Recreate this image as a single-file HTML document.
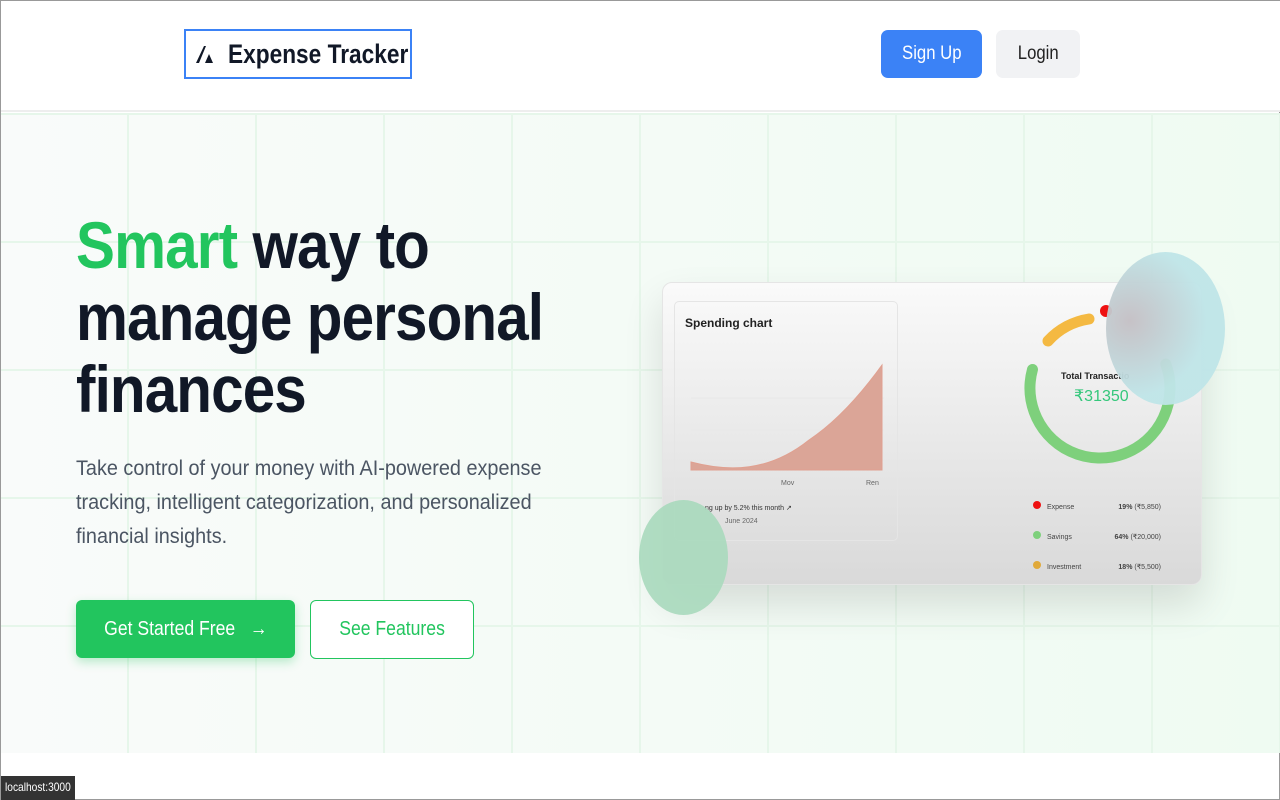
<!DOCTYPE html>
<html><head><meta charset="utf-8"><style>
*{box-sizing:border-box;margin:0;padding:0}
body{width:1280px;height:800px;overflow:hidden;font-family:"Liberation Sans",sans-serif;background:#fff;position:relative;border:1px solid #999}
.nav{position:absolute;left:0;top:0;width:1280px;height:111px;background:#fff;border-bottom:2px solid #eee}
.sx{display:inline-block;transform:scaleX(.88);transform-origin:left center;white-space:nowrap}
.logo{position:absolute;left:183px;top:28px;width:228px;height:50px;border:2px solid #3b82f6;display:flex;align-items:center;padding-left:8px;font-size:27px;font-weight:bold;color:#111827;white-space:nowrap;overflow:hidden}
.logo svg{margin-right:12px;flex:none}
.btn1{position:absolute;left:880px;top:29px;width:101px;height:48px;background:#3b82f6;color:#fff;border-radius:7px;font-size:19px;display:flex;align-items:center;justify-content:center}
.btn2{position:absolute;left:995px;top:29px;width:84px;height:48px;background:#f1f2f4;color:#222;border-radius:7px;font-size:19px;display:flex;align-items:center;justify-content:center}
.hero{position:absolute;left:0;top:112px;width:1280px;height:640px;
background-image:linear-gradient(#e6f6ea 2px,transparent 2px),linear-gradient(90deg,#e6f6ea 2px,transparent 2px),linear-gradient(90deg,#f9fbfa,#effbf2);
background-size:128px 128px,128px 128px,100% 100%;background-position:0 0,-2px 0,0 0}
h1{position:absolute;left:75px;top:208px;font-size:66px;line-height:72px;font-weight:bold;color:#111827;letter-spacing:-1px;transform:scaleX(.885);transform-origin:left top;white-space:nowrap}
h1 span{color:#22c55e}
.sub{position:absolute;left:75px;top:451px;width:530px;font-size:21px;line-height:34px;color:#4b5563;transform:scaleX(.945);transform-origin:left top}
.g1{position:absolute;left:75px;top:599px;width:219px;height:58px;background:#22c55e;color:#fff;border-radius:6px;font-size:20px;display:flex;align-items:center;justify-content:center;box-shadow:0 4px 10px rgba(34,197,94,.3)}
.g2{position:absolute;left:309px;top:599px;width:164px;height:59px;border:1px solid #22c55e;background:#fff;color:#22c55e;border-radius:6px;font-size:20px;display:flex;align-items:center;justify-content:center}
.card{position:absolute;left:661px;top:281px;width:540px;height:303px;border-radius:10px;background:linear-gradient(#fafafa,#d9d9d9);box-shadow:0 20px 40px rgba(0,0,0,.12);border:1px solid #e5e5e5}
.inner{position:absolute;left:11px;top:18px;width:224px;height:240px;border:1px solid #e5e5e5;border-radius:5px}
.sm{font-size:7px;color:#666;position:absolute}
.foot{position:absolute;left:0;top:775px;width:74px;background:#333;color:#fff;font-size:12px;padding:4px 4px;height:24px;overflow:hidden}
</style></head><body>
<div class="nav">
<div class="logo"><svg width="22" height="22" viewBox="0 0 22 22"><path d="M2 20 L10 3 L12 3 L5 20Z M11 20 L15 11 L19 20Z" fill="#111827"/></svg><span class="sx" style="transform:scaleX(.84)">Expense Tracker</span></div>
<div class="btn1"><span class="sx" style="transform-origin:center">Sign Up</span></div><div class="btn2"><span class="sx" style="transform-origin:center">Login</span></div>
</div>
<div class="hero"></div>
<h1><span>Smart</span> way to<br>manage personal<br>finances</h1>
<div class="sub">Take control of your money with AI-powered expense tracking, intelligent categorization, and personalized financial insights.</div>
<div class="g1"><span class="sx" style="transform-origin:center">Get Started Free &nbsp;&nbsp;→</span></div>
<div class="g2"><span class="sx" style="transform-origin:center">See Features</span></div>
<div class="card">
<div class="inner">
<div style="position:absolute;left:10px;top:14px;font-size:12px;font-weight:bold;color:#222">Spending chart</div>
<svg style="position:absolute;left:14px;top:58px" width="200" height="115" viewBox="0 0 200 115"><path d="M2 38H195M2 70H195M2 102H195" stroke="#e8e8e8"/><path d="M2 102 C40 112 80 112 120 80 C150 60 175 30 193 5 L193 110 L2 110Z" fill="#dba597" stroke="#e0a090"/></svg>
<div class="sm" style="left:106px;top:178px">Mov</div><div class="sm" style="left:191px;top:178px">Ren</div>
<div class="sm" style="left:30px;top:202px;color:#333">ng up by 5.2% this month ↗</div>
<div class="sm" style="left:50px;top:216px">June 2024</div>
</div>
<svg style="position:absolute;left:360px;top:15px" width="180" height="200" viewBox="0 0 180 200"><circle cx="77" cy="90" r="70" fill="none" stroke="#7ed07c" stroke-width="11" stroke-dasharray="263 500" transform="rotate(-20 77 90)" stroke-linecap="round"/><path d="M25 43 A70 70 0 0 1 66 21" fill="none" stroke="#f4b942" stroke-width="11" stroke-linecap="round"/><circle cx="83" cy="13" r="6" fill="#e11"/></svg>
<div style="position:absolute;left:398px;top:88px;font-size:9px;font-weight:bold;color:#222">Total Transactio</div>
<div style="position:absolute;left:411px;top:103px;font-size:16px;color:#34c77b">₹31350</div>
<div style="position:absolute;left:370px;top:210px;font-size:7px;color:#444;line-height:30px;width:128px">
<div><span style="display:inline-block;width:8px;height:8px;border-radius:4px;background:#e11;margin-right:6px"></span>Expense<span style="float:right"><b>19%</b> (₹5,850)</span></div>
<div><span style="display:inline-block;width:8px;height:8px;border-radius:4px;background:#7ed07c;margin-right:6px"></span>Savings<span style="float:right"><b>64%</b> (₹20,000)</span></div>
<div><span style="display:inline-block;width:8px;height:8px;border-radius:4px;background:#e0a93a;margin-right:6px"></span>Investment<span style="float:right"><b>18%</b> (₹5,500)</span></div>
</div>
</div>
<div style="position:absolute;left:1105px;top:251px;width:119px;height:153px;border-radius:50%;background:radial-gradient(circle at 20% 45%,#c4bfc4,#bfe5e8 60%);opacity:.95"></div>
<div style="position:absolute;left:638px;top:499px;width:89px;height:115px;border-radius:50%;background:#a9d9bd;opacity:.9"></div>
<div class="foot"><span class="sx" style="transform:scaleX(.85)">localhost:3000</span></div>
</body></html>
